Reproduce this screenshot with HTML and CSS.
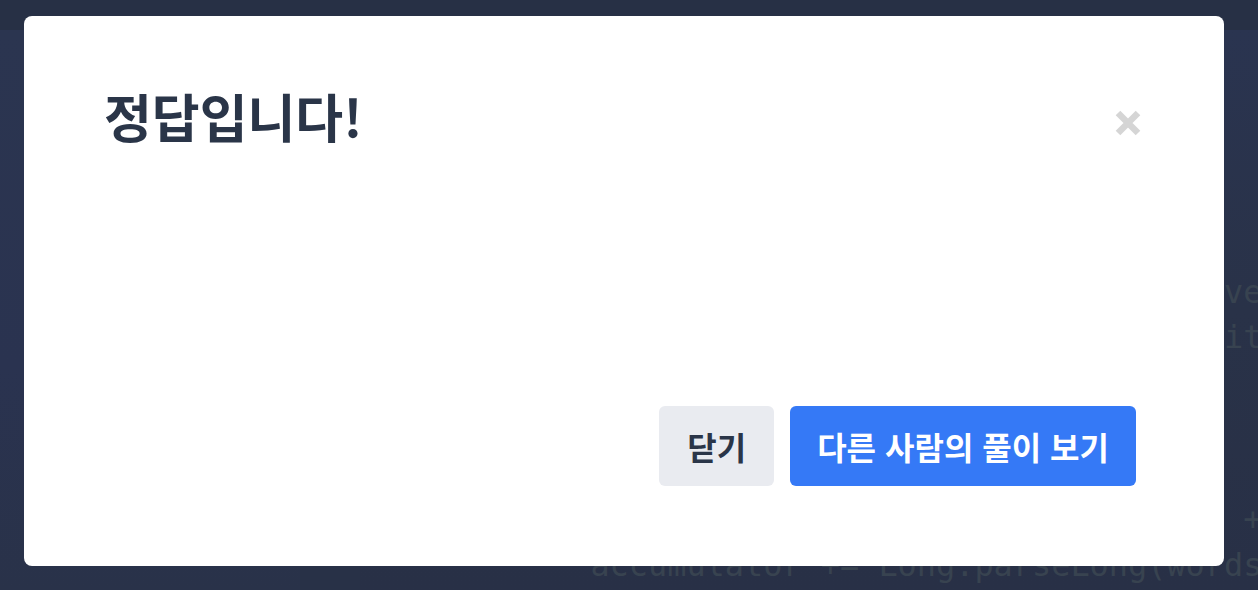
FILE: index.html
```html
<!DOCTYPE html>
<html lang="ko">
<head>
<meta charset="utf-8">
<title>정답입니다!</title>
<link rel="stylesheet" href="styles.css">
</head>
<body>
<div class="app">
  <header class="topbar"></header>
  <div class="workspace">
    <aside class="sidebar"></aside>
    <div class="gutter"></div>
    <pre class="code">import java.util.*;

class Solution {
    public long solution(String s) {
        long accumulator = 0;
        boolean found = false; int idx = remove(list);
        Iterator&lt;String&gt; iterator = wordList.iterator();
        while (iterator.hasNext()) {
            String[] words = it.next();
            int i = words.length - 1;
            long next = Math.max(prev, count) + 1;
            accumulator += Long.parseLong(words[i]);
        }</pre>
  </div>
</div>

<div class="backdrop">
  <div class="modal" role="dialog" aria-labelledby="modal-title">
    <div class="modal-header">
      <h1 class="modal-title" id="modal-title">정답입니다!</h1>
      <button class="modal-close" type="button" aria-label="닫기">
        <svg width="26" height="26" viewBox="0 0 26 26" aria-hidden="true">
          <path d="M3 3 L23 23 M23 3 L3 23" stroke="#d5d5d5" stroke-width="6.5" fill="none" stroke-linecap="butt"/>
        </svg>
      </button>
    </div>
    <div class="modal-footer">
      <button class="btn btn-secondary" type="button">닫기</button>
      <button class="btn btn-primary" type="button">다른 사람의 풀이 보기</button>
    </div>
  </div>
</div>
</body>
</html>
```

FILE: styles.css
```css
* {
  box-sizing: border-box;
}

html, body {
  margin: 0;
  padding: 0;
  width: 1258px;
  height: 590px;
  overflow: hidden;
  background: #283046;
  font-family: "Noto Sans CJK KR", "Noto Sans", sans-serif;
}

.app {
  display: flex;
  flex-direction: column;
  height: 590px;
}

.topbar {
  height: 30px;
  flex: none;
  background: #273045;
}

.workspace {
  flex: 1;
  display: flex;
  min-height: 0;
}

.sidebar {
  width: 300px;
  flex: none;
  background: linear-gradient(180deg, #2b3550 0%, #2a3350 60%, #293249 100%);
}

.gutter {
  width: 60px;
  flex: none;
  background: #283147;
}

.code {
  flex: 1;
  margin: 0;
  padding-top: 12px;
  font-family: "DejaVu Sans Mono", monospace;
  font-size: 31.9px;
  line-height: 45.5px;
  color: #384350;
  background: linear-gradient(180deg, #2a3450 0%, #293248 50%, #283046 100%);
  white-space: pre;
  overflow: hidden;
}

.backdrop {
  position: fixed;
  inset: 0;
  padding: 16px 0 0 24px;
}

.modal {
  width: 1200px;
  height: 550px;
  background: #ffffff;
  border-radius: 8px;
  padding: 74px 88px 80px 80px;
  display: flex;
  flex-direction: column;
}

.modal-header {
  display: flex;
  justify-content: space-between;
  align-items: flex-start;
}

.modal-title {
  margin: 0;
  font-size: 52px;
  line-height: 52px;
  font-weight: 700;
  color: #2a3548;
}

.modal-close {
  width: 36px;
  height: 36px;
  margin-top: 15px;
  margin-right: -10px;
  padding: 0;
  border: 0;
  background: transparent;
  display: flex;
  align-items: center;
  justify-content: center;
}

.modal-footer {
  margin-top: auto;
  display: flex;
  justify-content: flex-end;
  gap: 16px;
}

.btn {
  height: 80px;
  border: 0;
  border-radius: 6px;
  padding: 0 27px;
  font-family: "Noto Sans CJK KR", "Noto Sans", sans-serif;
  font-size: 32px;
  font-weight: 700;
}

.btn-secondary {
  padding: 0 28px;
  background: #e9ebf0;
  color: #2a3548;
}

.btn-primary {
  background: #3579f6;
  color: #ffffff;
}
```
